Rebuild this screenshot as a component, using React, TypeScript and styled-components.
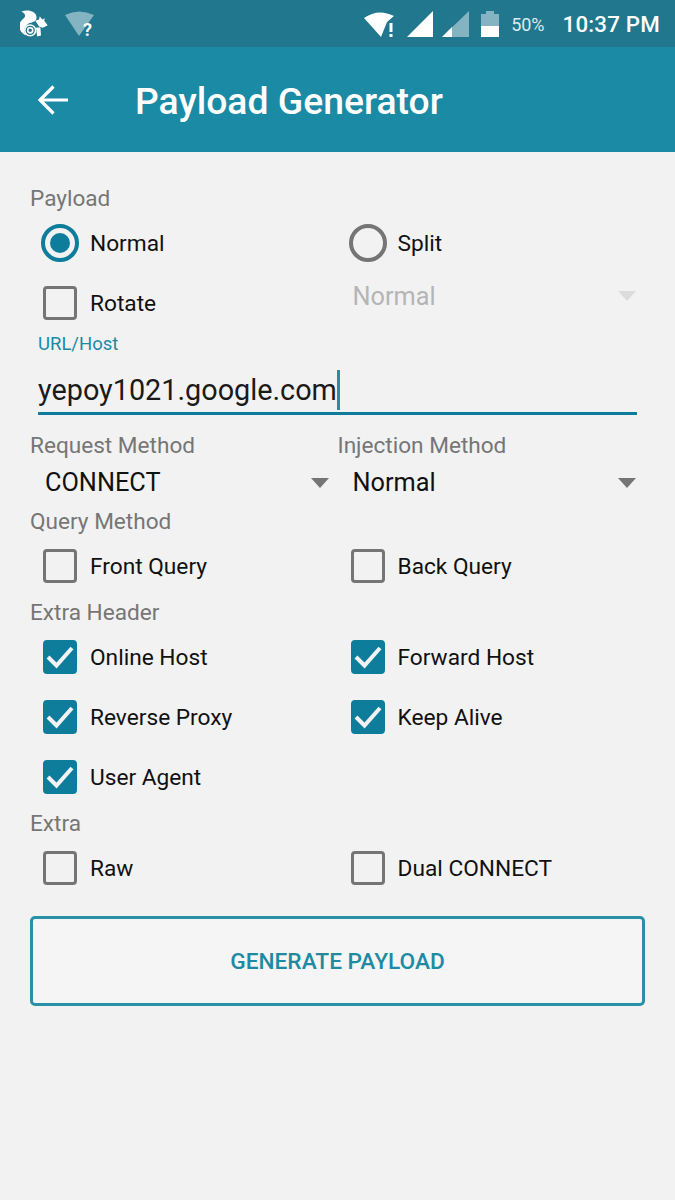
import React from "react";
import styled, { createGlobalStyle } from "styled-components";

const GlobalStyle = createGlobalStyle`
  html, body {
    margin: 0;
    padding: 0;
    background: #f2f2f2;
  }
  body {
    font-family: Roboto, "Liberation Sans", sans-serif;
  }
`;

const Screen = styled.div`
  width: 675px;
  height: 1200px;
  overflow: hidden;
  background: #f2f2f2;
`;

const StatusBar = styled.div`
  height: 47px;
  display: flex;
  align-items: center;
  padding: 0 15px 0 20px;
  box-sizing: border-box;
  background: #20778e;
  color: #fff;
`;
const StatusLeft = styled.div`
  display: flex;
  align-items: center;
  gap: 17px;
`;
const StatusRight = styled.div`
  margin-left: auto;
  display: flex;
  align-items: center;
  gap: 9px;
`;
const Percent = styled.span`
  padding-top: 1px;
  font-size: 18px;
  color: #dcebef;
`;
const Clock = styled.span`
  margin-left: 9px;
  padding-top: 1px;
  font-size: 22.3px;
  font-weight: 500;
  letter-spacing: 0.2px;
`;

const AppBar = styled.div`
  height: 105px;
  display: flex;
  align-items: center;
  padding-left: 38px;
  box-sizing: border-box;
  background: #1b8aa5;
  color: #fff;
`;
const Title = styled.h1`
  margin: 2px 0 0 67px;
  font-size: 37.3px;
  font-weight: 500;
`;

const Form = styled.div`
  padding: 34px 30px 0;
`;
const SectionLabel = styled.div<{ $spaced?: boolean }>`
  margin-top: ${(p) => (p.$spaced ? 4 : 0)}px;
  padding-bottom: 1px;
  font-size: 22.6px;
  line-height: 26px;
  color: #767676;
`;
const TwoColumns = styled.div`
  display: grid;
  grid-template-columns: 307.5px 307.5px;
`;
const Option = styled.div`
  height: 60px;
  display: flex;
  align-items: center;
  padding-left: 13px;
  font-size: 22.7px;
  color: #111;
`;
const OptionText = styled.span`
  margin-left: 13px;
`;
const Box = styled.div<{ $checked?: boolean }>`
  width: 34px;
  height: 34px;
  box-sizing: border-box;
  border-radius: 4px;
  border: 3.5px solid ${(p) => (p.$checked ? "#0e7d9c" : "#757575")};
  background: ${(p) => (p.$checked ? "#0e7d9c" : "transparent")};
  display: flex;
  align-items: center;
  justify-content: center;
`;
const RadioOption = styled(Option)`
  padding-left: 11px;
`;
const RadioText = styled(OptionText)`
  margin-left: 11px;
`;
const Radio = styled.div<{ $checked?: boolean }>`
  width: 38px;
  height: 38px;
  box-sizing: border-box;
  border-radius: 50%;
  border: 4px solid ${(p) => (p.$checked ? "#0e7d9c" : "#757575")};
  display: flex;
  align-items: center;
  justify-content: center;
  &::after {
    content: "";
    display: ${(p) => (p.$checked ? "block" : "none")};
    width: 20px;
    height: 20px;
    border-radius: 50%;
    background: #0e7d9c;
  }
`;
const SelectBox = styled.div<{ $disabled?: boolean }>`
  height: 45px;
  display: flex;
  align-items: center;
  justify-content: space-between;
  padding: 0 9px 0 15px;
  font-size: 25.3px;
  color: ${(p) => (p.$disabled ? "#b5b5b5" : "#111")};
`;
const DisabledSelect = styled(SelectBox)`
  height: 60px;
  padding-bottom: 14px;
  box-sizing: border-box;
`;
const Caret = styled.div<{ $disabled?: boolean }>`
  width: 0;
  height: 0;
  border-left: 9.5px solid transparent;
  border-right: 9.5px solid transparent;
  border-top: 10px solid ${(p) => (p.$disabled ? "#dcdcdc" : "#757575")};
`;
const FieldLabel = styled.div`
  margin-left: 8px;
  font-size: 18.5px;
  line-height: 22px;
  color: #1b8aa5;
`;
const Field = styled.div`
  margin: 0 8px 18px;
  height: 60px;
  box-sizing: border-box;
  display: flex;
  align-items: center;
  padding-top: 12px;
  border-bottom: 3px solid #0e7d9c;
  font-size: 28.8px;
  color: #1a1a1a;
`;
const TextCursor = styled.span`
  width: 3px;
  height: 40px;
  background: #2b8ba5;
`;
const GenerateButton = styled.button`
  display: block;
  width: 615px;
  height: 90px;
  margin-top: 18px;
  padding: 0;
  box-sizing: border-box;
  border: 3px solid #2a90a6;
  border-radius: 5px;
  background: #f5f5f5;
  color: #1e8aa3;
  font-family: inherit;
  font-size: 22.7px;
  font-weight: 500;
`;

const Squirrel = () => (
  <svg width="28" height="28" viewBox="58 28 88 88" fill="#fff">
    <path d="M62 33C80 26 110 30 110 52C110 66 94 66 86 70C76 76 72 90 78 108C60 102 52 84 58 68C62 58 74 54 74 46C74 40 70 38 62 33Z" />
    <path d="M106 62L118 58L120 48L128 58L136 54L134 62L145 76L130 84L118 80Z" />
    <path d="M108 84L122 82L124 108L112 111Z" />
    <circle cx="90" cy="92" r="19" fill="#20778e" />
    <circle cx="90" cy="92" r="17" fill="none" stroke="#fff" strokeWidth="5" />
    <circle cx="90" cy="92" r="8" fill="none" stroke="#fff" strokeWidth="5" />
  </svg>
);

const UnknownWifi = () => (
  <svg width="30" height="34" viewBox="0 -4 30 34" fill="#fff">
    <path d="M0 4Q14 -3 29 4L14 25Z" opacity="0.45" />
    <text x="18" y="25" fontFamily="Roboto" fontWeight="700" fontSize="18">?</text>
  </svg>
);

const AlertWifi = () => (
  <svg width="35" height="26" viewBox="0 0 35 26" fill="#fff">
    <path d="M1 7Q15 -3 31 5L24 11L18 26Z" />
    <rect x="26.5" y="12" width="3" height="9" />
    <rect x="26.5" y="23" width="3" height="3" />
  </svg>
);

const SignalFull = () => (
  <svg width="26" height="26" viewBox="0 0 26 26" fill="#fff">
    <path d="M0 26L26 0V26Z" />
  </svg>
);

const SignalLow = () => (
  <svg width="27" height="26" viewBox="0 0 27 26" fill="#fff">
    <path d="M0 26L27 0V26Z" opacity="0.45" />
    <path d="M0 26L10 16V26Z" />
  </svg>
);

const Battery = () => (
  <svg width="24" height="26" viewBox="0 0 24 26" fill="#fff">
    <path d="M3 3H8V0H16V3H21V15H3Z" opacity="0.45" />
    <rect x="3" y="15" width="18" height="11" />
  </svg>
);

const BackArrow = () => (
  <svg width="30" height="30" viewBox="0 0 30 30" fill="none" stroke="#fff" strokeWidth="3.2">
    <path d="M30 15H2M15.5 1.5L2 15L15.5 28.5" />
  </svg>
);

const CheckBox = ({ checked, label }: { checked?: boolean; label: string }) => (
  <Option>
    <Box $checked={checked}>
      {checked && (
        <svg width="28" height="24" viewBox="0 0 28 24" fill="none" stroke="#f2f2f2" strokeWidth="4">
          <path d="M2 12L10.5 20.5L26 3" />
        </svg>
      )}
    </Box>
    <OptionText>{label}</OptionText>
  </Option>
);

const App = () => {
  return (
    <Screen>
      <GlobalStyle />
      <StatusBar>
        <StatusLeft>
          <Squirrel />
          <UnknownWifi />
        </StatusLeft>
        <StatusRight>
          <AlertWifi />
          <SignalFull />
          <SignalLow />
          <Battery />
          <Percent>50%</Percent>
          <Clock>10:37 PM</Clock>
        </StatusRight>
      </StatusBar>
      <AppBar>
        <BackArrow />
        <Title>Payload Generator</Title>
      </AppBar>
      <Form>
        <SectionLabel>Payload</SectionLabel>
        <TwoColumns>
          <RadioOption>
            <Radio $checked />
            <RadioText>Normal</RadioText>
          </RadioOption>
          <RadioOption>
            <Radio />
            <RadioText>Split</RadioText>
          </RadioOption>
          <CheckBox label="Rotate" />
          <DisabledSelect $disabled>
            Normal
            <Caret $disabled />
          </DisabledSelect>
        </TwoColumns>
        <FieldLabel>URL/Host</FieldLabel>
        <Field>
          yepoy1021.google.com
          <TextCursor />
        </Field>
        <TwoColumns>
          <div>
            <SectionLabel>Request Method</SectionLabel>
            <SelectBox>
              CONNECT
              <Caret />
            </SelectBox>
          </div>
          <div>
            <SectionLabel>Injection Method</SectionLabel>
            <SelectBox>
              Normal
              <Caret />
            </SelectBox>
          </div>
        </TwoColumns>
        <SectionLabel $spaced>Query Method</SectionLabel>
        <TwoColumns>
          <CheckBox label="Front Query" />
          <CheckBox label="Back Query" />
        </TwoColumns>
        <SectionLabel $spaced>Extra Header</SectionLabel>
        <TwoColumns>
          <CheckBox checked label="Online Host" />
          <CheckBox checked label="Forward Host" />
          <CheckBox checked label="Reverse Proxy" />
          <CheckBox checked label="Keep Alive" />
          <CheckBox checked label="User Agent" />
        </TwoColumns>
        <SectionLabel $spaced>Extra</SectionLabel>
        <TwoColumns>
          <CheckBox label="Raw" />
          <CheckBox label="Dual CONNECT" />
        </TwoColumns>
        <GenerateButton>GENERATE PAYLOAD</GenerateButton>
      </Form>
    </Screen>
  );
};

export default App;
